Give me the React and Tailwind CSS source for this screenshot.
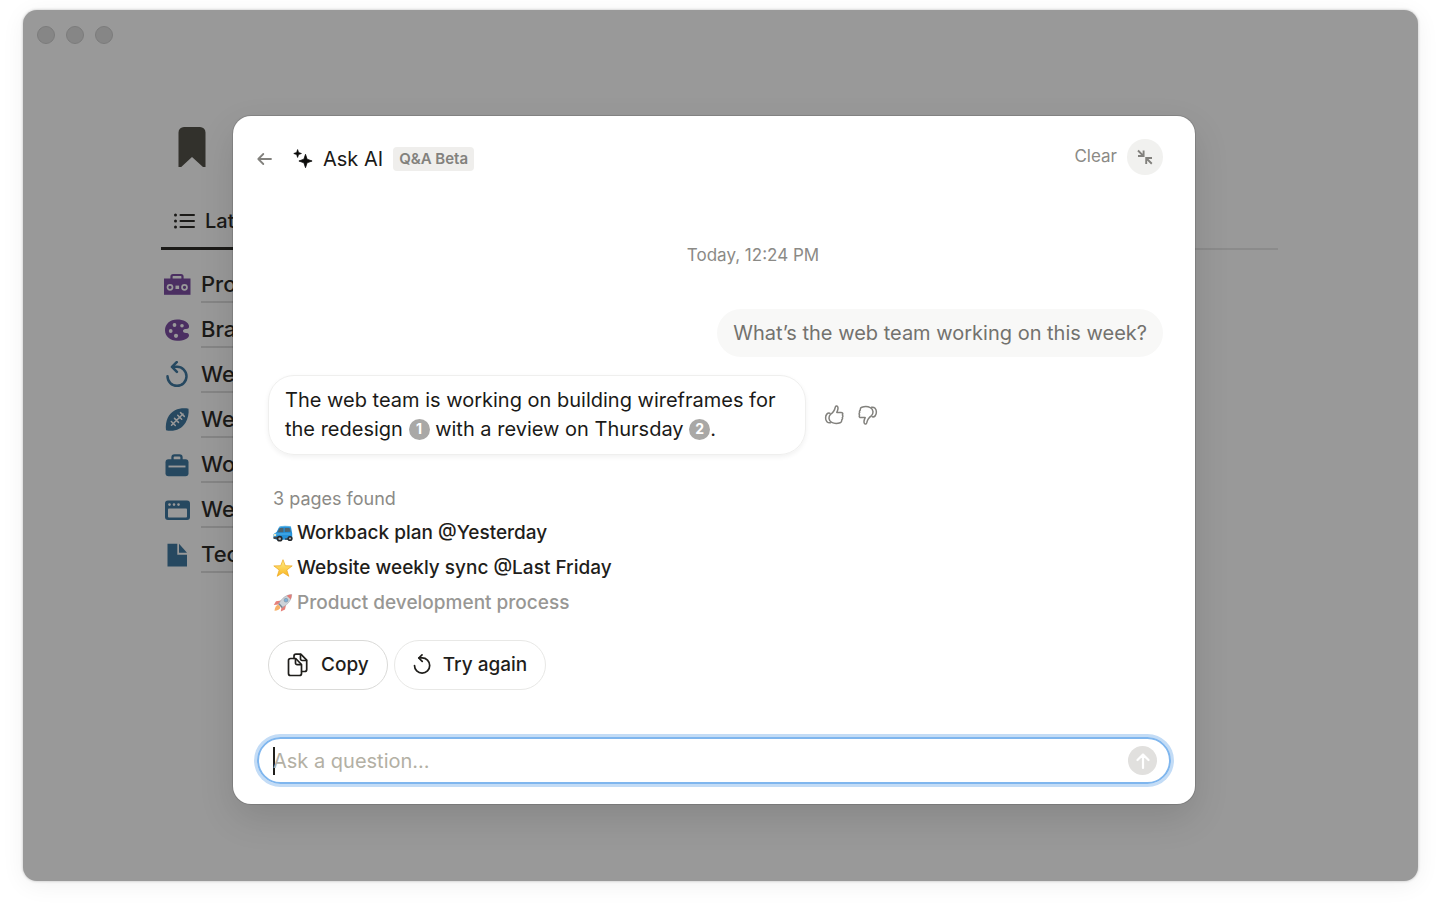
import React from "react";

function BookmarkIcon() {
  return (
    <svg width="28" height="40" viewBox="0 0 28 40" aria-hidden="true">
      <path d="M6 0h16a5.500 5.500 0 0 1 5.500 5.500V40h-2.500L14 30 3.200 40H.5V5.500A5.500 5.500 0 0 1 6 0z" fill="#32312c" />
    </svg>
  );
}

function ListIcon() {
  return (
    <svg width="22" height="18" viewBox="0 0 22 18" aria-hidden="true">
      <g fill="#1b1a18">
        <circle cx="2.500" cy="3" r="1.500" />
        <circle cx="2.500" cy="9" r="1.500" />
        <circle cx="2.500" cy="15" r="1.500" />
      </g>
      <path d="M7.500 3h13.500M7.500 9h13.500M7.500 15h13.500" stroke="#1b1a18" strokeWidth="2" strokeLinecap="round" />
    </svg>
  );
}

const iconProps = { width: 28, height: 28, viewBox: "0 0 28 28", "aria-hidden": true };

function ToolboxIcon() {
  return (
    <svg {...iconProps}>
      <path d="M8.500 8V5.500q0-1.500 1.500-1.500h8q1.500 0 1.500 1.500V8" fill="none" stroke="#4b2f62" strokeWidth="2.200" />
      <path d="M1 7.500h26.500v16.300H1z" fill="#4b2f62" />
      <circle cx="7" cy="16.300" r="2.500" fill="none" stroke="#999" strokeWidth="1.700" />
      <circle cx="21.500" cy="16.300" r="2.500" fill="none" stroke="#999" strokeWidth="1.700" />
      <rect x="12.500" y="14.600" width="3.600" height="3.400" fill="#999" />
    </svg>
  );
}

function PaletteIcon() {
  return (
    <svg {...iconProps}>
      <path d="M14 3.500C7 3.500 2 8.200 2 14.300 2 20.500 7.300 24.800 14 24.800c6.500 0 12-2.300 12-5.300 0-2-1.300-2.500-3-2.500-1.800 0-3-.7-3-2 0-1.500 1.500-2 3-2 2.300 0 3.300-.7 3-3.200C25.400 6 20.500 3.500 14 3.500z" fill="#4b2f62" />
      <circle cx="11.500" cy="9" r="1.900" fill="#999" />
      <circle cx="19" cy="9.800" r="1.800" fill="#999" />
      <circle cx="7.700" cy="15" r="1.900" fill="#999" />
      <circle cx="13" cy="19.800" r="2.100" fill="#999" />
    </svg>
  );
}

function RedoIcon() {
  return (
    <svg {...iconProps}>
      <path d="M4.500 15.300a9.500 9.500 0 1 0 9.500-9.500H10" fill="none" stroke="#264860" strokeWidth="2.500" strokeLinecap="round" />
      <path d="M13.700 1.200L9 5.900l4.900 4.900" fill="none" stroke="#264860" strokeWidth="2.600" strokeLinecap="round" strokeLinejoin="round" />
    </svg>
  );
}

function FootballIcon() {
  return (
    <svg {...iconProps}>
      <path d="M25.500 2.700c-4-.8-9.200-.5-13.500 1.500C5.500 7.500 2 15 3 24.300c7.500 1.800 15.500-.8 19.500-7.500 2.500-4.300 3.600-9.700 3-14.100z" fill="#264860" />
      <path d="M8.500 19.300L20 8M8.300 15.500l4 4M11.500 12.400l4 4M14.700 9.300l4 4M17.500 6.600l3.800 3.800" stroke="#999" strokeWidth="1.500" strokeLinecap="round" />
    </svg>
  );
}

function BriefcaseIcon() {
  return (
    <svg {...iconProps}>
      <path d="M9.500 9V6.300q0-2 2-2h5q2 0 2 2V9" fill="none" stroke="#264860" strokeWidth="2.300" />
      <rect x="2.500" y="8.300" width="23" height="17" rx="3" fill="#264860" />
      <path d="M5.500 15.500h17" stroke="#999" strokeWidth="1.900" />
    </svg>
  );
}

function BrowserIcon() {
  return (
    <svg {...iconProps}>
      <rect x="2" y="4.500" width="25" height="19.500" rx="3" fill="#264860" />
      <rect x="5" y="12.500" width="19" height="9" rx=".8" fill="#999" />
      <circle cx="6.500" cy="8.600" r="1.300" fill="#999" />
      <circle cx="11" cy="8.600" r="1.300" fill="#999" />
      <circle cx="15.500" cy="8.600" r="1.300" fill="#999" />
    </svg>
  );
}

function PageIcon() {
  return (
    <svg {...iconProps}>
      <path d="M4.500 2.800h9.800v11h9.700v11.800H4.500z" fill="#264860" />
      <path d="M16 2.800l8 9h-8z" fill="#264860" />
    </svg>
  );
}

function BackIcon() {
  return (
    <svg width="16" height="14" viewBox="0 0 16 14" fill="none" stroke="#82817d" strokeWidth="1.800" strokeLinecap="round" strokeLinejoin="round" aria-hidden="true">
      <path d="M1.500 7H14M6.300 2l-5 5 5 5" />
    </svg>
  );
}

function SparkleIcon() {
  return (
    <svg width="20" height="20" viewBox="0 0 20 20" fill="#0c0c0b" stroke="#0c0c0b" strokeLinejoin="round" strokeWidth=".8" aria-hidden="true">
      <path d="M4.600.6l.9 2.900 2.900 1-2.900 1-.9 2.900-.9-2.900-2.900-1 2.900-1z" />
      <path d="M12.500 5.300l1.600 4.900 5 1.800-5 1.800-1.600 4.900-1.600-4.900L5.900 12l5-1.800z" />
    </svg>
  );
}

function CollapseIcon() {
  return (
    <svg width="18" height="18" viewBox="0 0 18 18" fill="none" stroke="#82817d" strokeWidth="1.900" aria-hidden="true">
      <path d="M2 2.500l5.300 5.300M2 8h5.600V2.400M15.800 15.700L10.300 10.300M16 10H10.200v6" />
    </svg>
  );
}

function ThumbIcon({ down }) {
  return (
    <svg
      width="20"
      height="20"
      viewBox="0 0 20 20"
      fill="none"
      stroke="#82817d"
      strokeWidth="1.500"
      strokeLinecap="round"
      strokeLinejoin="round"
      className={down ? "rotate-180" : ""}
      aria-hidden="true"
    >
      <path d="M6.400 9.400C9.300 7.400 10.800 4.800 11.300 2.100c.3-1.300 1.700-1.500 2.300-.5.900 1.600.2 3.800-.8 5.800h4.100c1.700 0 2.300 1.300 1.500 2.500.7.800.6 2-.1 2.600.4 1 .1 2-.6 2.400.2 1.300-.3 2.400-1.500 2.800-2.600.9-6.200.8-8.500-.3-3.300-1.600-3.300-5.900-1.300-8z" />
      <path d="M5.800 8.200C3.500 7.600 1.600 9.700 1.600 12.900c0 3 1.900 5.400 4.800 4.900" />
    </svg>
  );
}

function CarIcon() {
  return (
    <svg width="20" height="18" viewBox="0 0 20 18" aria-hidden="true">
      <path d="M6 2.300C7.500.8 16.500.6 18 2l1.200 6.500v5.200l-1.400 1H3.200L.6 13 .5 9.200 3.600 7z" fill="#2591d8" />
      <path d="M6.800 3.100h3.700v4.100H4.300zM11.700 3h4.800l1.300 3.800-6.100.3z" fill="#4d6470" />
      <path d="M6 2.300C9 .9 15 1 18 2" fill="none" stroke="#65b9e8" />
      <path d="M1 9h16.500" stroke="#52b5ee" />
      <path d="M.4 11.800h5.500v2.200H.6zM12 13.200h7v1.500h-7z" fill="#3e4950" />
      <circle cx="2" cy="10" r="1.300" fill="#ece9c2" />
      <circle cx="6.700" cy="13.700" r="2.900" fill="#25282b" />
      <circle cx="17" cy="13.500" r="2.600" fill="#25282b" />
      <circle cx="6.700" cy="13.700" r="1.300" fill="#aeb2b4" />
      <circle cx="17" cy="13.500" r="1.100" fill="#aeb2b4" />
    </svg>
  );
}

function StarIcon() {
  return (
    <svg width="20" height="20" viewBox="0 0 20 20" aria-hidden="true">
      <defs>
        <linearGradient id="star-fill" x1="0" y1="0" x2="0" y2="1">
          <stop offset="0" stopColor="#fff08a" />
          <stop offset="1" stopColor="#f9b51f" />
        </linearGradient>
      </defs>
      <path d="M10 .7l2.300 6 6.900.2-5.400 4.100 2 6.300L10 13.600l-5.800 3.700 2-6.300L.8 6.900l6.900-.2z" fill="url(#star-fill)" stroke="#eda620" strokeWidth=".7" strokeLinejoin="round" />
    </svg>
  );
}

function RocketIcon() {
  return (
    <svg width="20" height="20" viewBox="0 0 20 20" className="opacity-70" aria-hidden="true">
      <path d="M8.500 6.500L3 7.200.8 11l4.500-.6zM13 11l-1 4.500-4.200 2L8.500 13z" fill="#dc4b42" />
      <path d="M18.700.6c-5 .2-9.500 2.900-13 9.300l3.600 3.500c6-3 9-7.500 9.400-12.800z" fill="#b9c1c9" stroke="#77828d" strokeWidth=".6" />
      <path d="M18.700.6c-1.800 0-3.400.4-5 1.200l4 3.800c.6-1.600 1-3.200 1-5z" fill="#d8473f" />
      <circle cx="13" cy="6.200" r="1.900" fill="#4a91cb" stroke="#506371" strokeWidth=".6" />
      <path d="M5.300 10.800c-2.500.5-3.300 3-3.800 5.900 3-.4 5.500-1.200 6-3.800z" fill="#f4922b" />
      <path d="M5.800 9.800l3.500 3.600" stroke="#3c5268" strokeWidth="1.500" />
    </svg>
  );
}

function CopyIcon() {
  return (
    <svg width="22" height="24" viewBox="0 0 22 24" fill="none" stroke="#1f1e1b" strokeWidth="1.700" strokeLinejoin="round" strokeLinecap="round" aria-hidden="true">
      <path d="M3.500 5.500h5.200l5.800 6v9a2 2 0 0 1-2 2h-9a2 2 0 0 1-2-2v-13a2 2 0 0 1 2-2z" />
      <path d="M8.500 6v4a1.700 1.700 0 0 0 1.700 1.700h4" />
      <path d="M7 5.300V3.200a2 2 0 0 1 2-2h4.800l5.900 6v9.300a2 2 0 0 1-2 2h-3" />
      <path d="M13.500 1.500v4.300A1.700 1.700 0 0 0 15.200 7.500h4.200" />
    </svg>
  );
}

function RetryIcon() {
  return (
    <svg width="18" height="22" viewBox="0 0 18 22" fill="none" stroke="#1f1e1b" strokeWidth="1.700" strokeLinejoin="round" strokeLinecap="round" aria-hidden="true">
      <path d="M1.500 11.500a7.600 7.600 0 1 0 7.600-7.600H6" />
      <path d="M9 .9L5.800 4l3.400 3.400" />
    </svg>
  );
}

const pages = [
  { label: "Pro", Icon: ToolboxIcon },
  { label: "Bra", Icon: PaletteIcon },
  { label: "We", Icon: RedoIcon },
  { label: "We", Icon: FootballIcon },
  { label: "Wo", Icon: BriefcaseIcon },
  { label: "We", Icon: BrowserIcon },
  { label: "Tec", Icon: PageIcon },
];

const results = [
  { label: "Workback plan @Yesterday", Icon: CarIcon, color: "text-[#1f1e1b]" },
  { label: "Website weekly sync @Last Friday", Icon: StarIcon, color: "text-[#1f1e1b]" },
  { label: "Product development process", Icon: RocketIcon, color: "text-[#989794]" },
];

function Citation({ number }) {
  return (
    <a href={"#source-" + number} className="inline-flex size-[21px] items-center justify-center rounded-full bg-[#a9a8a6] align-[2px] text-sm leading-none font-bold text-white">
      {number}
    </a>
  );
}

function Workspace() {
  return (
    <div className="pr-[140px] pl-[138px]">
      <div className="flex justify-start pt-[83px] pl-[17px]">
        <BookmarkIcon />
      </div>
      <nav className="mt-7 flex border-b-2 border-[#8b8b8b]">
        <a href="#latest" className="-mb-0.5 flex h-[55px] w-24 items-center gap-2.5 border-b-3 border-[#1b1a18] pl-3 text-xl font-medium text-[#1b1a18]">
          <ListIcon />
          Lat
        </a>
      </nav>
      <ul className="mt-3">
        {pages.map(({ label, Icon }, i) => (
          <li key={i} className="flex h-[45px] items-center gap-2.5 pl-0.5">
            <Icon />
            <a href={"#page-" + i} className="flex-1 text-[22px] leading-[26px] font-medium text-[#1b1a18]">
              <span className="block w-1/2 border-b-2 border-[#858585] py-1">{label}</span>
            </a>
          </li>
        ))}
      </ul>
    </div>
  );
}

function AskDialog() {
  return (
    <section
      role="dialog"
      aria-label="Ask AI"
      className="absolute inset-x-0 top-[106px] mr-[223px] ml-[210px] flex flex-col rounded-[18px] bg-white pb-5 shadow-[0_0_0_1px_rgba(0,0,0,0.12),0_14px_36px_rgba(0,0,0,0.12)]"
    >
      <header className="flex items-center pt-[23px] pr-8 pl-6">
        <div className="flex items-center gap-2.5 pt-[3px]">
          <button type="button" aria-label="Back" className="mr-2.5 flex">
            <BackIcon />
          </button>
          <SparkleIcon />
          <h1 className="text-xl leading-7 text-[#1b1a18]">Ask AI</h1>
          <span className="rounded bg-[#efeeec] px-1.5 text-[15px] leading-6 font-semibold text-[#82817d]">Q&amp;A Beta</span>
        </div>
        <button type="button" className="ml-auto text-[17px] text-[#8b8a86]">
          Clear
        </button>
        <button type="button" aria-label="Collapse" className="ml-2.5 flex size-9 items-center justify-center rounded-full bg-[#f1f1ef]">
          <CollapseIcon />
        </button>
      </header>

      <div className="flex flex-col pt-[66px] pr-8 pl-[35px]">
        <time className="pl-[75px] text-center text-[17px] leading-7 text-[#8b8a86]">Today, 12:24 PM</time>
        <p className="mt-10 self-end rounded-full bg-[#f8f8f7] px-4 py-2.5 text-xl leading-7 text-[#73726e]">
          What’s the web team working on this week?
        </p>
        <div className="mt-[18px] flex items-center gap-[18px]">
          <p className="w-[538px] rounded-[26px] border border-[#efefee] px-4 py-[10px] text-xl leading-[29px] text-[#1b1a18] shadow-[0_2px_5px_rgba(0,0,0,0.06)]">
            The web team is working on building wireframes for the redesign <Citation number={1} /> with a review on Thursday{" "}
            <Citation number={2} />.
          </p>
          <div className="flex gap-3.5">
            <button type="button" aria-label="Good answer">
              <ThumbIcon />
            </button>
            <button type="button" aria-label="Bad answer">
              <ThumbIcon down />
            </button>
          </div>
        </div>

        <h2 className="mt-[26px] pl-[5px] text-lg leading-[35px] text-[#8b8a86]">3 pages found</h2>
        <ul className="pl-[5px]">
          {results.map(({ label, Icon, color }) => (
            <li key={label}>
              <a href="#result" className={"flex h-[35px] items-center gap-1 text-[19px] font-medium " + color}>
                <Icon />
                {label}
              </a>
            </li>
          ))}
        </ul>

        <div className="mt-[19px] flex gap-1.5 text-[19px] font-medium text-[#1f1e1b]">
          <button type="button" className="flex h-[50px] items-center gap-3 rounded-full border border-[#dadad8] px-[18px]">
            <CopyIcon />
            Copy
          </button>
          <button type="button" className="flex h-[50px] items-center gap-3 rounded-full border border-[#e8e8e6] px-[18px]">
            <RetryIcon />
            Try again
          </button>
        </div>
      </div>

      <form
        onSubmit={(e) => e.preventDefault()}
        className="mx-6 mt-[47px] flex h-[47px] items-center rounded-full border-2 border-[#7fb6ee] pr-3 pl-3.5 shadow-[0_0_0_3px_#c3dcf6]"
      >
        <span className="-mr-0.5 h-7 w-0.5 bg-[#1f1e1b]" aria-hidden="true" />
        <input
          type="text"
          aria-label="Ask a question"
          placeholder="Ask a question..."
          className="min-w-0 flex-1 bg-transparent text-xl text-[#1b1a18] outline-none placeholder:text-[#b3b0a4]"
        />
        <button type="submit" aria-label="Send" className="flex size-[29px] items-center justify-center rounded-full bg-[#e1e0de]">
          <svg width="16" height="18" viewBox="0 0 16 18" fill="none" stroke="#fff" strokeWidth="2.200" strokeLinecap="round" strokeLinejoin="round" aria-hidden="true">
            <path d="M8 16V2.500M2.500 8L8 2.500 13.500 8" />
          </svg>
        </button>
      </form>
    </section>
  );
}

export default function App() {
  return (
    <div className="min-h-screen bg-white pt-2.5 pr-[38px] pb-[25px] pl-[23px] font-['Inter',sans-serif]">
      <main className="relative min-h-[calc(100vh-35px)] rounded-[14px] bg-[#999999] shadow-[0_0_3px_rgba(0,0,0,0.25),0_4px_24px_rgba(0,0,0,0.06)]">
        <div className="flex gap-[11px] pt-4 pl-3.5">
          <span className="size-[18px] rounded-full border border-[#7c7c7c] bg-[#868686]" />
          <span className="size-[18px] rounded-full border border-[#7c7c7c] bg-[#868686]" />
          <span className="size-[18px] rounded-full border border-[#7c7c7c] bg-[#868686]" />
        </div>
        <Workspace />
        <AskDialog />
      </main>
    </div>
  );
}
